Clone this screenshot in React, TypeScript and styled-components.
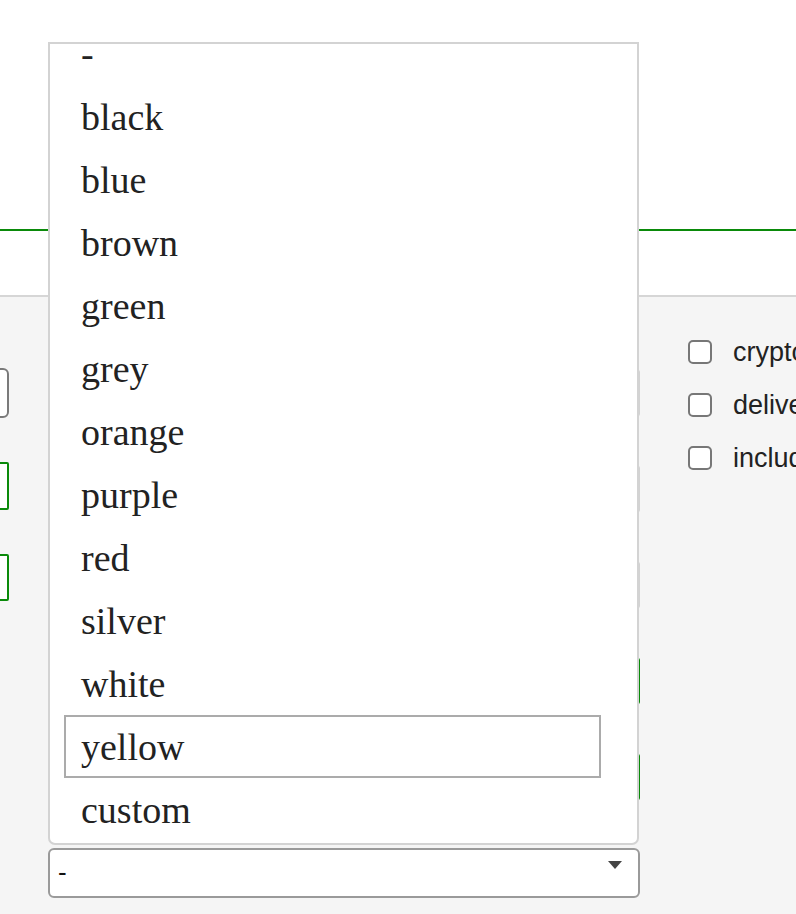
import React from 'react';
import styled, { createGlobalStyle } from 'styled-components';

const GlobalStyle = createGlobalStyle`
  html, body {
    margin: 0;
    padding: 0;
    background: #ffffff;
    overflow: hidden;
  }
  body {
    font-family: "Liberation Sans", Arial, sans-serif;
    color: #222222;
  }
`;

const Page = styled.div`
  width: 796px;
  height: 914px;
  overflow: hidden;
  display: flex;
  flex-direction: column;
`;

const Header = styled.header`
  height: 229px;
  flex: none;
  border-bottom: 2px solid #0a8a0a;
`;

const TabStrip = styled.div`
  height: 64px;
  flex: none;
  border-bottom: 2px solid #d6d6d6;
`;

const Panel = styled.section`
  flex: 1;
  background: #f5f5f5;
  display: grid;
  grid-template-columns: 200px 592px 1fr;
  column-gap: 39px;
  margin-left: -191px;
  align-items: start;
`;

const Column = styled.div<{ $top: number; $gap: number; $indent?: number }>`
  display: flex;
  flex-direction: column;
  padding-top: ${p => p.$top}px;
  padding-left: ${p => p.$indent ?? 0}px;
  gap: ${p => p.$gap}px;
  min-width: 0;
`;

const Field = styled.input<{ $tone: 'plain' | 'muted' | 'valid'; $h: number }>`
  box-sizing: border-box;
  width: 100%;
  height: ${p => p.$h}px;
  margin: 0;
  padding: 0 10px;
  font: inherit;
  font-size: 26px;
  background: #ffffff;
  outline: none;
  border: 2px solid
    ${p => (p.$tone === 'valid' ? '#0a8a0a' : p.$tone === 'muted' ? '#d2d2d2' : '#7a7a7a')};
  border-radius: ${p => (p.$tone === 'plain' ? '6px' : '2px')};
`;

const SelectWrap = styled.div`
  position: relative;
  margin-top: -2px;
`;

const SelectBox = styled.div`
  box-sizing: border-box;
  height: 50px;
  border: 2px solid #9a9a9a;
  border-radius: 6px;
  background: #ffffff;
  display: flex;
  align-items: center;
  justify-content: space-between;
  padding: 0 16px 2px 8px;
  font-size: 26px;
  color: #111111;
`;

const Caret = styled.svg`
  width: 14px;
  height: 8px;
  margin-top: -14px;
`;

const Menu = styled.div`
  position: absolute;
  left: 0;
  bottom: calc(100% + 3px);
  width: 591px;
  height: 803px;
  box-sizing: border-box;
  background: #ffffff;
  border: 2px solid #d3d3d3;
  border-radius: 0 0 7px 7px;
  overflow: hidden;
`;

const MenuList = styled.ul`
  list-style: none;
  margin: -22px 0 0 14px;
  padding: 0;
  width: 537px;
`;

const Option = styled.li<{ $active?: boolean }>`
  box-sizing: border-box;
  height: 63px;
  display: flex;
  align-items: center;
  padding-left: 15px;
  border: 2px solid ${p => (p.$active ? '#ababab' : 'transparent')};
  font-family: "Liberation Serif", "Times New Roman", serif;
  font-size: 38px;
  color: #222222;
  white-space: nowrap;
`;

const Check = styled.label`
  display: flex;
  align-items: center;
  gap: 21px;
  height: 24px;
  font-size: 27px;
  color: #222222;
  white-space: nowrap;
`;

const Box = styled.span`
  width: 24px;
  height: 24px;
  flex: none;
  box-sizing: border-box;
  border: 2px solid #777777;
  border-radius: 5px;
  background: #ffffff;
`;

const colours = [
  '-', 'black', 'blue', 'brown', 'green', 'grey', 'orange',
  'purple', 'red', 'silver', 'white', 'yellow', 'custom',
];

const flags = ['cryptographic signature', 'delivery receipt', 'include attachments'];

export default function App() {
  return (
    <Page>
      <GlobalStyle />
      <Header />
      <TabStrip />
      <Panel>
        <Column $top={71} $gap={44}>
          <Field $tone="plain" $h={50} readOnly />
          <Field $tone="valid" $h={48} readOnly />
          <Field $tone="valid" $h={47} readOnly />
        </Column>

        <Column $top={73} $gap={50}>
          <Field $tone="muted" $h={46} readOnly />
          <Field $tone="muted" $h={46} readOnly />
          <Field $tone="muted" $h={46} readOnly />
          <Field $tone="valid" $h={46} readOnly />
          <Field $tone="valid" $h={46} readOnly />
          <SelectWrap>
            <Menu>
              <MenuList>
                {colours.map(c => (
                  <Option key={c} $active={c === 'yellow'}>{c}</Option>
                ))}
              </MenuList>
            </Menu>
            <SelectBox>
              <span>-</span>
              <Caret viewBox="0 0 14 8">
                <path d="M0 0 H14 L7 8 Z" fill="#444444" />
              </Caret>
            </SelectBox>
          </SelectWrap>
        </Column>

        <Column $top={43} $gap={29} $indent={9}>
          {flags.map(f => (
            <Check key={f}>
              <Box />
              {f}
            </Check>
          ))}
        </Column>
      </Panel>
    </Page>
  );
}
